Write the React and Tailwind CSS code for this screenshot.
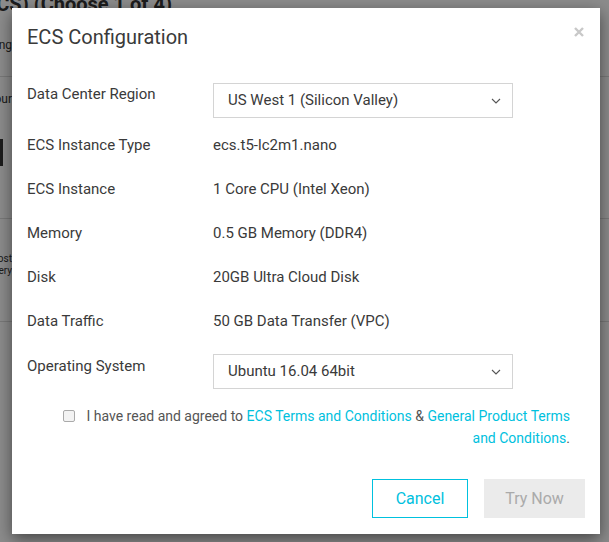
import React from "react";

const rows = [
  { label: "ECS Instance Type", value: "ecs.t5-lc2m1.nano" },
  { label: "ECS Instance", value: "1 Core CPU (Intel Xeon)" },
  { label: "Memory", value: "0.5 GB Memory (DDR4)" },
  { label: "Disk", value: "20GB Ultra Cloud Disk" },
  { label: "Data Traffic", value: "50 GB Data Transfer (VPC)" },
];

function Chevron() {
  return (
    <svg width="10" height="6" viewBox="0 0 10 6" fill="none">
      <path d="M1 1l4 4 4-4" stroke="#555" strokeWidth="1.1" />
    </svg>
  );
}

function SelectBox({ value }) {
  return (
    <div className="w-[300px] h-[35px] border border-[#d4d4d4] flex items-center justify-between pl-[14px] pr-[11px] text-[15px] text-[#3a3a3a]">
      <span>{value}</span>
      <Chevron />
    </div>
  );
}

export default function App() {
  return (
    <div className="relative w-[609px] h-[542px] overflow-hidden bg-white font-['Roboto',sans-serif]">
      {/* page behind the dialog */}
      <div className="flex flex-col text-[#333]">
        <div className="-mt-[10px] -ml-[22px] text-[20px] leading-[28px] font-bold whitespace-nowrap">
          (ECS) (Choose 1 of 4)
        </div>
        <div className="mt-[19px] w-[12px] flex justify-end text-[12px] leading-[16px] whitespace-nowrap">
          <span>Setting</span>
        </div>
        <div className="mt-[23px] border-b border-[#ddd]" />
        <div className="mt-[14px] w-[12px] flex justify-end text-[12px] leading-[16px] whitespace-nowrap">
          <span>Your</span>
        </div>
        <div className="mt-[32px] w-[3px] h-[27px] bg-[#333]" />
        <div className="mt-[52px] border-b border-[#ddd]" />
        <div className="mt-[34px] w-[12px] flex flex-col items-end text-[10px] leading-[12px] whitespace-nowrap">
          <span>Most</span>
          <span>every</span>
        </div>
        <div className="mt-[44px] border-b border-[#ddd]" />
      </div>

      <div className="absolute inset-0 bg-black/45" />

      {/* dialog */}
      <div className="absolute left-[12px] top-[8px] w-[588px] h-[526px] bg-white shadow-[0_5px_15px_rgba(0,0,0,0.5)] px-[15px] pt-[15px] text-[#3a3a3a]">
        <div className="flex items-start justify-between">
          <h4 className="text-[20px] leading-[28px]">ECS Configuration</h4>
          <svg className="mt-[4px] mr-[1px]" width="10" height="10" viewBox="0 0 10 10">
            <path d="M1 1l8 8M9 1l-8 8" stroke="#c8c8c8" strokeWidth="2.4" />
          </svg>
        </div>

        <div className="mt-[32px] flex items-start">
          <div className="w-[186px] text-[15px] leading-[22px]">Data Center Region</div>
          <SelectBox value="US West 1 (Silicon Valley)" />
        </div>

        {rows.map((row, index) => (
          <div
            key={row.label}
            className={`flex text-[15px] leading-[22px] ${index === 0 ? "mt-[16px]" : "mt-[22px]"}`}
          >
            <div className="w-[186px]">{row.label}</div>
            <div>{row.value}</div>
          </div>
        ))}

        <div className="mt-[22px] flex items-start">
          <div className="w-[186px] pt-[1px] text-[15px] leading-[22px]">Operating System</div>
          <SelectBox value="Ubuntu 16.04 64bit" />
        </div>

        <div className="mt-[16px] flex items-start">
          <div className="ml-[36px] mt-[5px] w-[12px] h-[12px] rounded-[2px] border border-[#aaa] bg-[#f3f3f3]" />
          <div className="ml-[11px] w-[484px] text-right text-[14px] leading-[22px] text-[#555]">
            <div className="whitespace-nowrap">
              I have read and agreed to{" "}
              <span className="text-[#00c1de]">ECS Terms and Conditions</span> &amp;{" "}
              <span className="text-[#00c1de]">General Product Terms</span>
            </div>
            <div className="whitespace-nowrap">
              <span className="text-[#00c1de]">and Conditions</span>.
            </div>
          </div>
        </div>

        <div className="mt-[30px] flex justify-end gap-[16px]">
          <button className="w-[96px] h-[39px] border border-[#00c1de] text-[#00c1de] text-[16px]">
            Cancel
          </button>
          <button className="w-[101px] h-[39px] bg-[#ebebeb] text-[#aaa] text-[16px]">
            Try Now
          </button>
        </div>
      </div>
    </div>
  );
}
